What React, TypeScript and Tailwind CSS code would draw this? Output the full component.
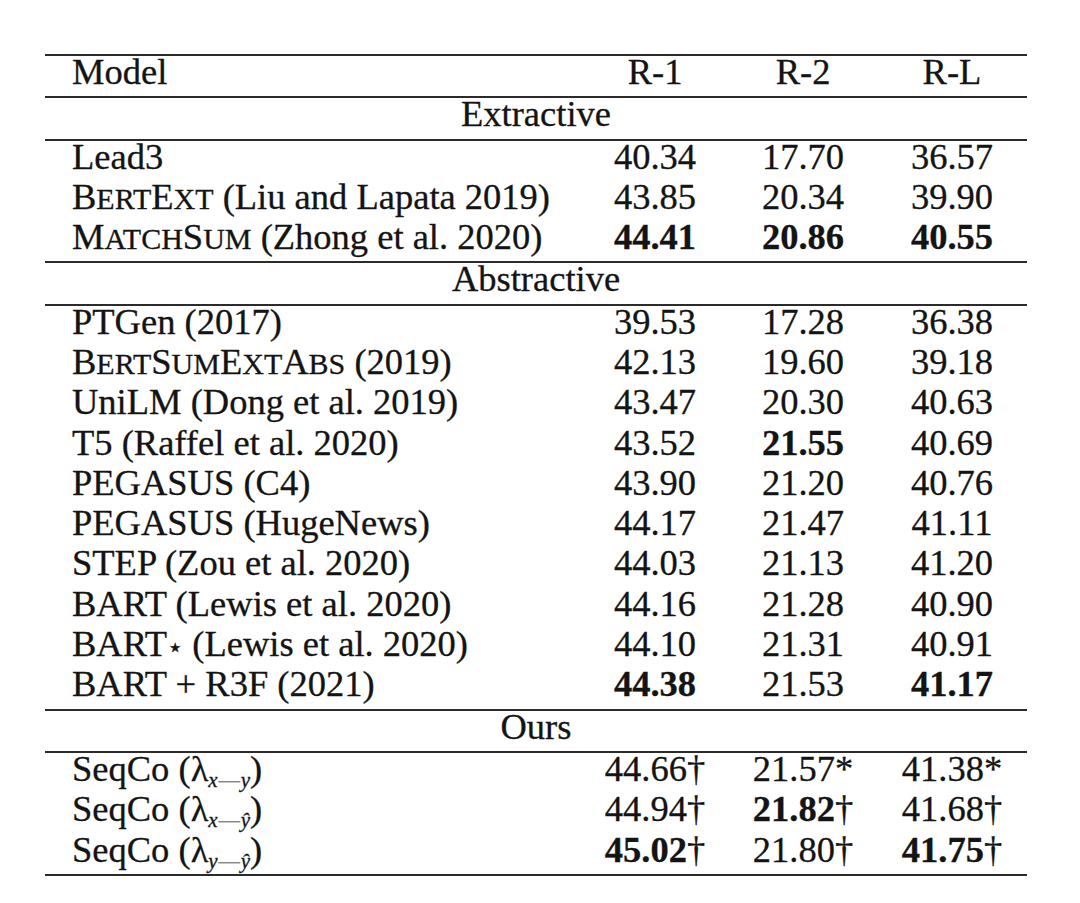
import React from "react";

type Cell = { v: string; b?: boolean; m?: string };
type Row = { name: React.ReactNode; cells: Cell[] };

// fake LaTeX small caps: lowercase letters become smaller capitals
const SC = ({ text }: { text: string }) => (
    <span>
        {text.split("").map((ch, i) =>
            ch === ch.toUpperCase() ? (
                <span key={i}>{ch}</span>
            ) : (
                <span key={i} className="text-[30px]">{ch.toUpperCase()}</span>
            )
        )}
    </span>
);

const Lam = ({ a, b }: { a: string; b: string }) => (
    <span>
        (λ
        <sub className="text-[21px] italic relative top-[6px] align-baseline">
            {a}
            <span className="not-italic text-[#b0b0b0] mx-[1px]">—</span>
            {b}
        </sub>
        )
    </span>
);

const extractive: Row[] = [
    { name: "Lead3", cells: [{ v: "40.34" }, { v: "17.70" }, { v: "36.57" }] },
    {
        name: <><SC text="BertExt" /> (Liu and Lapata 2019)</>,
        cells: [{ v: "43.85" }, { v: "20.34" }, { v: "39.90" }],
    },
    {
        name: <><SC text="MatchSum" /> (Zhong et al. 2020)</>,
        cells: [{ v: "44.41", b: true }, { v: "20.86", b: true }, { v: "40.55", b: true }],
    },
];

const abstractive: Row[] = [
    { name: "PTGen (2017)", cells: [{ v: "39.53" }, { v: "17.28" }, { v: "36.38" }] },
    { name: <><SC text="BertSumExtAbs" /> (2019)</>, cells: [{ v: "42.13" }, { v: "19.60" }, { v: "39.18" }] },
    { name: "UniLM (Dong et al. 2019)", cells: [{ v: "43.47" }, { v: "20.30" }, { v: "40.63" }] },
    { name: "T5 (Raffel et al. 2020)", cells: [{ v: "43.52" }, { v: "21.55", b: true }, { v: "40.69" }] },
    { name: "PEGASUS (C4)", cells: [{ v: "43.90" }, { v: "21.20" }, { v: "40.76" }] },
    { name: "PEGASUS (HugeNews)", cells: [{ v: "44.17" }, { v: "21.47" }, { v: "41.11" }] },
    { name: "STEP (Zou et al. 2020)", cells: [{ v: "44.03" }, { v: "21.13" }, { v: "41.20" }] },
    { name: "BART (Lewis et al. 2020)", cells: [{ v: "44.16" }, { v: "21.28" }, { v: "40.90" }] },
    { name: <>BART<span className="text-[26px]">⋆</span> (Lewis et al. 2020)</>, cells: [{ v: "44.10" }, { v: "21.31" }, { v: "40.91" }] },
    { name: "BART + R3F (2021)", cells: [{ v: "44.38", b: true }, { v: "21.53" }, { v: "41.17", b: true }] },
];

const ours: Row[] = [
    { name: <>SeqCo <Lam a="x" b="y" /></>, cells: [{ v: "44.66", m: "†" }, { v: "21.57", m: "*" }, { v: "41.38", m: "*" }] },
    { name: <>SeqCo <Lam a="x" b="ŷ" /></>, cells: [{ v: "44.94", m: "†" }, { v: "21.82", b: true, m: "†" }, { v: "41.68", m: "†" }] },
    { name: <>SeqCo <Lam a="y" b="ŷ" /></>, cells: [{ v: "45.02", b: true, m: "†" }, { v: "21.80", m: "†" }, { v: "41.75", b: true, m: "†" }] },
];

const Rule = () => <div className="col-span-4 h-[2px] bg-[#2b2b2b]" />;

const Section = ({ title }: { title: string }) => (
    <div className="col-span-4 h-[40.3px] pb-[8px] flex items-center justify-center">
        <span>{title}</span>
    </div>
);

function Rows({ rows }: { rows: Row[] }) {
    return (
        <>
            {rows.map((r, i) => (
                <React.Fragment key={i}>
                    <div className="h-[40.3px] pb-[8px] flex items-center pl-[27px] whitespace-nowrap">
                        <span>{r.name}</span>
                    </div>
                    {r.cells.map((c, j) => (
                        <div key={j} className="h-[40.3px] pb-[8px] flex items-center justify-center">
                            <span>
                                <span className={c.b ? "font-bold" : ""}>{c.v}</span>
                                {c.m}
                            </span>
                        </div>
                    ))}
                </React.Fragment>
            ))}
        </>
    );
}

export default function App() {
    return (
        <div className="w-[1080px] h-[903px] bg-white overflow-hidden pt-[54px] pl-[45px] text-[#141414] text-[36.5px] leading-none [-webkit-text-stroke:0.3px_#141414] [font-family:'Liberation_Serif','Times_New_Roman',serif]">
            <div className="grid grid-cols-[536px_148px_148px_150px] w-[982px]">
                <Rule />
                <div className="h-[40.3px] pb-[8px] flex items-center pl-[27px]"><span>Model</span></div>
                <div className="h-[40.3px] pb-[8px] flex items-center justify-center"><span>R-1</span></div>
                <div className="h-[40.3px] pb-[8px] flex items-center justify-center"><span>R-2</span></div>
                <div className="h-[40.3px] pb-[8px] flex items-center justify-center"><span>R-L</span></div>
                <Rule />
                <Section title="Extractive" />
                <Rule />
                <Rows rows={extractive} />
                <Rule />
                <Section title="Abstractive" />
                <Rule />
                <Rows rows={abstractive} />
                <Rule />
                <Section title="Ours" />
                <Rule />
                <Rows rows={ours} />
                <Rule />
            </div>
        </div>
    );
}
